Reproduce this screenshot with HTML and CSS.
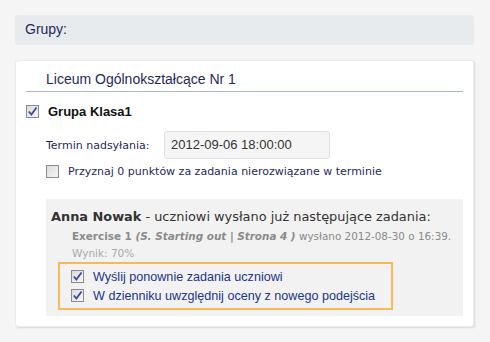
FILE: index.html
```html
<!DOCTYPE html>
<html lang="pl">
<head>
    <meta charset="UTF-8">
    <title>Grupy</title>
    <link rel="stylesheet" href="styles.css">
</head>
<body>
    <div class="page">
        <div class="section-title">Grupy:</div>

        <div class="card">
            <div class="school">Liceum Ogólnokształcące Nr 1</div>

            <div class="group-row">
                <span class="check checked"><svg viewBox="0 0 9 9"><path d="M1.5 4.5 L3.6 7 L7.8 1.2" /></svg></span>
                <span class="group-name">Grupa Klasa1</span>
            </div>

            <div class="field-row">
                <label class="field-label">Termin nadsyłania:</label>
                <div class="field-input">2012-09-06 18:00:00</div>
            </div>

            <div class="option-row">
                <span class="check"></span>
                <span>Przyznaj 0 punktów za zadania nierozwiązane w terminie</span>
            </div>

            <!-- student notice -->
            <div class="notice">
                <div class="notice-head"><b>Anna Nowak</b> - uczniowi wysłano już następujące zadania:</div>
                <div class="task"><b>Exercise 1 <i>(S. Starting out | Strona 4 )</i></b> wysłano 2012-08-30 o 16:39.</div>
                <div class="score">Wynik: 70%</div>

                <div class="resend">
                    <div class="resend-row">
                        <span class="check checked"><svg viewBox="0 0 9 9"><path d="M1.5 4.5 L3.6 7 L7.8 1.2" /></svg></span>
                        <span>Wyślij ponownie zadania uczniowi</span>
                    </div>
                    <div class="resend-row">
                        <span class="check checked"><svg viewBox="0 0 9 9"><path d="M1.5 4.5 L3.6 7 L7.8 1.2" /></svg></span>
                        <span>W dzienniku uwzględnij oceny z nowego podejścia</span>
                    </div>
                </div>
            </div>
        </div>
    </div>
</body>
</html>
```

FILE: styles.css
```css
/* Page */
body {
    margin: 0;
    background: #f5f5f5;
    font-family: 'Liberation Sans', Arial, sans-serif;
    color: #1f2a5c;
}

.page {
    padding: 15px 16px 15px 15px;
}

/* Header bar */
.section-title {
    background: #e8ebee;
    border-radius: 3px;
    height: 30px;
    line-height: 28px;
    padding-left: 10px;
    font-size: 14px;
    color: #1f2a5c;
}

/* Card */
.card {
    margin-top: 15px;
    background: #fff;
    border: 1px solid #ebebeb;
    border-radius: 3px;
    box-shadow: 1px 1px 2px rgba(0, 0, 0, 0.12);
    padding: 0 10px 10px 10px;
}

.school {
    margin-top: 9px;
    padding-left: 20px;
    height: 21px;
    font-size: 14px;
    line-height: 18px;
    border-bottom: 1px solid #a9b8d4;
}

/* Checkbox */
.check {
    display: inline-block;
    box-sizing: border-box;
    width: 13px;
    height: 13px;
    border: 1px solid #8c8c8c;
    background: linear-gradient(135deg, #dcdcdc, #f6f6f6);
    flex-shrink: 0;
}

.check svg {
    display: block;
    width: 11px;
    height: 11px;
}

.check svg path {
    fill: none;
    stroke: #3a4ca3;
    stroke-width: 1.5;
}

.group-row {
    display: flex;
    align-items: center;
    gap: 9px;
    margin-top: 12px;
}

.group-name {
    font-weight: bold;
    font-size: 13px;
    color: #111;
}

/* Deadline */
.field-row {
    display: flex;
    align-items: center;
    margin-top: 12px;
    padding-left: 20px;
    font-family: 'DejaVu Sans', Verdana, sans-serif;
    font-size: 11px;
}

.field-label {
    width: 118px;
}

.field-input {
    box-sizing: border-box;
    width: 166px;
    height: 28px;
    line-height: 26px;
    padding-left: 6px;
    border: 1px solid #e0e0e0;
    border-radius: 3px;
    background: #f5f5f5;
    font-family: 'Liberation Sans', Arial, sans-serif;
    font-size: 13px;
    color: #333;
}

.option-row {
    display: flex;
    align-items: center;
    gap: 9px;
    margin-top: 6px;
    padding-left: 20px;
    font-family: 'DejaVu Sans', Verdana, sans-serif;
    font-size: 11px;
}

/* Notice box */
.notice {
    margin: 21px 0 0 20px;
    background: #f2f2f2;
    padding: 10px 0 6px 5px;
}

.notice-head {
    font-family: 'DejaVu Sans', Verdana, sans-serif;
    font-size: 12.9px;
    color: #333;
}

.task {
    margin-top: 6px;
    padding-left: 21px;
    font-family: 'DejaVu Sans', Verdana, sans-serif;
    font-size: 10.4px;
    color: #8a8a8a;
}

.score {
    margin-top: 5px;
    padding-left: 21px;
    font-family: 'DejaVu Sans', Verdana, sans-serif;
    font-size: 10.5px;
    color: #aaa;
}

.resend {
    width: 320px;
    margin: 3px 0 0 7px;
    border: 2px solid #f9b95a;
    padding: 3px 0 3px 11px;
}

.resend-row {
    display: flex;
    align-items: center;
    gap: 9px;
    height: 19px;
    font-size: 12.6px;
    color: #22358c;
}
```
